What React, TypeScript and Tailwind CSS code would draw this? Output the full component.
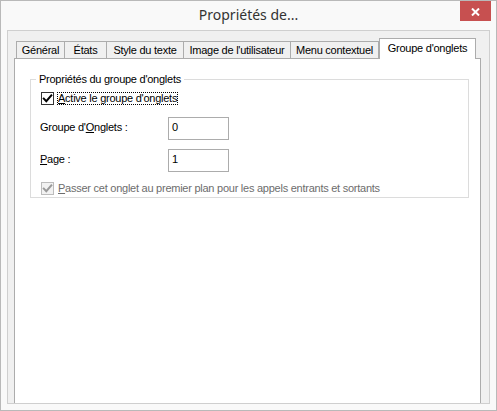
import React from "react";

const ui: React.CSSProperties = { fontFamily: '"Liberation Sans", Arial, sans-serif' };
const titleFont: React.CSSProperties = { fontFamily: '"Noto Sans", "Open Sans", sans-serif' };

type TabDef = { label: string; width: string; first?: boolean };

const tabs: TabDef[] = [
  { label: "Général", width: "w-[49px]", first: true },
  { label: "États", width: "w-[43px]" },
  { label: "Style du texte", width: "w-[78px]" },
  { label: "Image de l'utilisateur", width: "w-[108px]" },
  { label: "Menu contextuel", width: "w-[89px]" },
];

function CheckMark({ color }: { color: string }) {
  return (
    <svg width="11" height="11" viewBox="0 0 11 11" className="block">
      <path d="M1.8 5.6 L4.3 8.2 L9.3 2.4" fill="none" stroke={color} strokeWidth="2" strokeLinecap="square" />
    </svg>
  );
}

function CheckBox({ disabled }: { disabled?: boolean }) {
  return (
    <div
      className={
        disabled
          ? "w-[13px] h-[13px] shrink-0 border border-[#bcbcbc] bg-[#f2f2f2]"
          : "w-[13px] h-[13px] shrink-0 border border-[#333333] bg-white"
      }
    >
      <CheckMark color={disabled ? "#9a9a9a" : "#000000"} />
    </div>
  );
}

function TextBox({ value }: { value: string }) {
  return (
    <div className="w-[61px] h-[23px] border border-[#acacac] bg-white pl-[3px] pt-[3px] text-[11px] leading-[13px] text-black">
      {value}
    </div>
  );
}

export default function App() {
  return (
    <div
      style={ui}
      className="w-[497px] h-[411px] flex flex-col border border-[#b9b9b9] bg-[#f9f9f9] overflow-hidden text-black tracking-[-0.25px]"
    >
      {/* title bar */}
      <div className="grid grid-cols-[1fr_auto_1fr] h-[29px] shrink-0">
        <div />
        <div style={titleFont} className="text-[14px] leading-[20px] pt-[4px] tracking-normal text-[#333333]">
          Propriétés de...
        </div>
        <div className="flex justify-end pr-[5px]">
          <div className="w-[31px] h-[20px] bg-[#c75050] flex justify-center pt-[7px]">
            <svg width="9" height="8" viewBox="0 0 9 8" className="block">
              <path d="M1 0.5 L8 7.5 M8 0.5 L1 7.5" stroke="#ffffff" strokeWidth="2" />
            </svg>
          </div>
        </div>
      </div>

      {/* dialog body */}
      <div className="mx-[6px] mb-[6px] flex-1 min-h-0 border border-[#cfcfcf] bg-[#f0f0f0] flex flex-col pt-[7px]">
        {/* tab strip */}
        <div className="relative z-10 flex items-end h-[20px] ml-[8px] shrink-0 text-[11px]">
          {tabs.map((t) => (
            <div
              key={t.label}
              className={`${t.width} ${t.first ? "" : "-ml-px"} h-[17px] border border-b-0 border-[#acacac] bg-[#f0f0f0] flex items-center justify-center leading-[13px] whitespace-nowrap`}
            >
              {t.label}
            </div>
          ))}
          <div className="w-[97px] h-[21px] -mb-px border border-b-0 border-[#acacac] bg-white flex items-center justify-center pb-[2px] leading-[13px] whitespace-nowrap">
            Groupe d'onglets
          </div>
        </div>

        {/* tab page */}
        <div className="ml-[6px] mr-[8px] flex-1 border border-b-0 border-[#acacac] bg-white text-[11px]">
          <fieldset className="ml-[15px] mt-[14px] w-[439px] border border-[#dcdcdc] pb-[2px]">
            <legend className="ml-[5px] px-[3px] leading-[13px]">Propriétés du groupe d'onglets</legend>

            <div className="flex items-center mt-[6px] pl-[10px]">
              <CheckBox />
              <span className="ml-[3px] border border-dotted border-black leading-[11px] px-0">
                <u>A</u>ctive le groupe d'onglets
              </span>
            </div>

            <div className="flex items-start mt-[12px] pl-[9px]">
              <span className="w-[128px] mt-[4px] leading-[13px]">
                Groupe d'<u>O</u>nglets :
              </span>
              <TextBox value="0" />
            </div>

            <div className="flex items-start mt-[9px] pl-[9px]">
              <span className="w-[128px] mt-[4px] leading-[13px]">
                <u>P</u>age :
              </span>
              <TextBox value="1" />
            </div>

            <div className="flex items-center mt-[10px] pl-[10px]">
              <CheckBox disabled />
              <span className="ml-[4px] leading-[13px] text-[#6d6d6d]">
                <u>P</u>asser cet onglet au premier plan pour les appels entrants et sortants
              </span>
            </div>
          </fieldset>
        </div>
      </div>
    </div>
  );
}
